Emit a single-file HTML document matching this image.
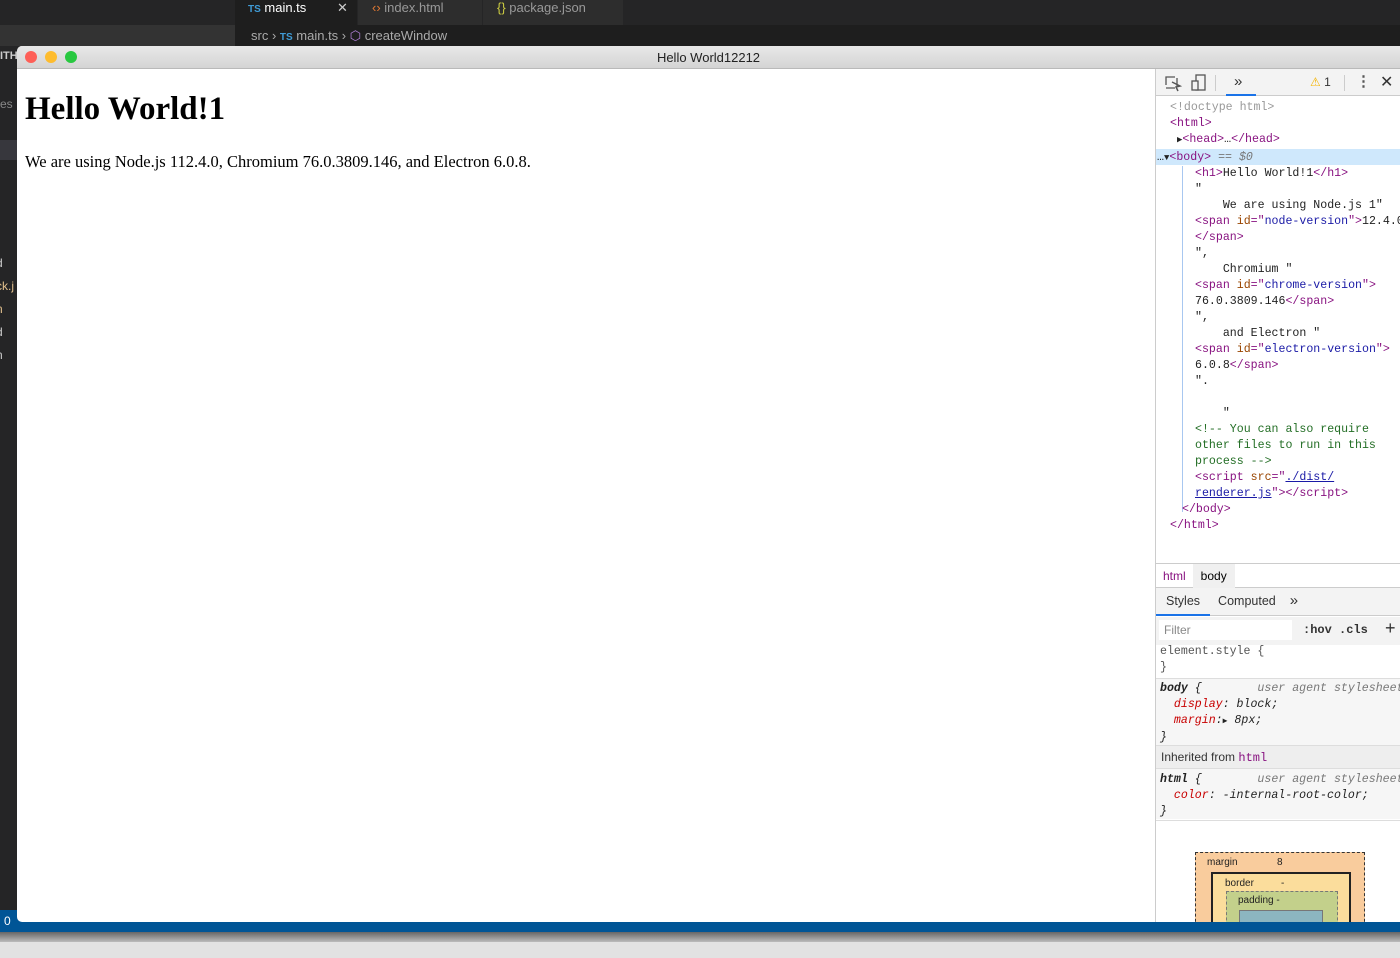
<!DOCTYPE html>
<html><head><style>
*{margin:0;padding:0;box-sizing:border-box}
body{width:1400px;height:958px;overflow:hidden;background:#252526;font-family:"Liberation Sans",sans-serif;position:relative}
.abs{position:absolute}
.mono{font-family:"Liberation Mono",monospace;font-size:12px}
.tag{color:#881280}.attr{color:#994500}.val{color:#1a1aa6}.cm{color:#236e25}
.dl{position:absolute;white-space:pre;font-family:"Liberation Mono",monospace;font-size:11.6px;color:#222;line-height:16px}
</style></head><body>
<div class="abs" style="left:0;top:0;width:1400px;height:25px;background:#252526"></div>
<div class="abs" style="left:0;top:25px;width:235px;height:21px;background:#333"></div>
<div class="abs" style="left:235px;top:0;width:122px;height:25px;background:#1e1e1e;color:#fff;font-size:13px;padding:0 0 0 13px;line-height:16px"><span style="color:#3f9bd6;font-size:10px;font-weight:bold">TS</span> main.ts<span style="position:absolute;left:102px;color:#ccc">✕</span></div>
<div class="abs" style="left:358px;top:0;width:124px;height:25px;background:#2d2d2d;color:#999;font-size:13px;padding-left:14px;line-height:16px"><span style="color:#e37933">‹›</span> index.html</div>
<div class="abs" style="left:483px;top:0;width:140px;height:25px;background:#2d2d2d;color:#999;font-size:13px;padding-left:14px;line-height:16px"><span style="color:#cbcb41">{}</span> package.json</div>
<div class="abs" style="left:235px;top:25px;width:1165px;height:21px;background:#1e1e1e;color:#aaa;font-size:13px;padding-left:16px;line-height:22px">src › <span style="color:#3f9bd6;font-size:10px;font-weight:bold">TS</span> main.ts › <span style="color:#b180d7">⬡</span> createWindow</div>
<div class="abs" style="left:0;top:140px;width:17px;height:20px;background:#37373d"></div>
<div class="abs" style="left:0;top:50px;color:#ccc;font-size:11px;font-weight:bold">ITH</div>
<div class="abs" style="left:0;top:97px;color:#888;font-size:12px">es</div>
<div class="abs" style="left:-4px;top:252px;color:#ccc;font-size:12px;line-height:23px">d<br><span style="color:#e2c08d">ck.j</span><br><span style="color:#e2c08d">n</span><br>d<br>n</div>
<div class="abs" style="left:0;top:910px;width:1400px;height:22px;background:#005596;color:#fff;font-size:12px;padding-left:4px;line-height:22px">0</div>
<div class="abs" style="left:0;top:932px;width:1400px;height:10px;background:linear-gradient(#666,#bbb)"></div>
<div class="abs" style="left:0;top:942px;width:1400px;height:16px;background:#e2e2e2"></div>
<div class="abs" style="left:17px;top:46px;width:1383px;height:876px;background:#fff;border-radius:5px 0 0 5px;overflow:hidden">
 <div class="abs" style="left:0;top:0;width:1383px;height:23px;background:linear-gradient(#e8e8e8,#d4d4d4);border-bottom:1px solid #b9b9b9;text-align:center;font-size:13px;line-height:23px;color:#222">Hello World12212</div>
 <div class="abs" style="left:8px;top:5px;width:12px;height:12px;border-radius:50%;background:#fe5f57"></div>
 <div class="abs" style="left:28px;top:5px;width:12px;height:12px;border-radius:50%;background:#febc2e"></div>
 <div class="abs" style="left:48px;top:5px;width:12px;height:12px;border-radius:50%;background:#28c840"></div>
 <div class="abs" style="left:8px;top:45px;font-family:'Liberation Serif',serif;font-size:33px;font-weight:bold;color:#000">Hello World!1</div>
 <div class="abs" style="left:8px;top:106px;font-family:'Liberation Serif',serif;font-size:16.5px;color:#000">We are using Node.js 112.4.0, Chromium 76.0.3809.146, and Electron 6.0.8.</div>
 <div class="abs" style="left:1138px;top:23px;width:245px;height:853px;background:#fff;border-left:1px solid #ccc;overflow:hidden">
  <div class="abs" style="left:0;top:0;width:245px;height:27px;background:#f3f3f3;border-bottom:1px solid #ccc"></div>
  <svg class="abs" style="left:8px;top:5px" width="20" height="18"><rect x="2" y="3" width="11" height="11" fill="none" stroke="#555" stroke-width="1.3" stroke-dasharray="9 3"/><path d="M8 8 L16 12 L12 13 L14 17" fill="none" stroke="#555" stroke-width="1.5"/></svg>
  <svg class="abs" style="left:34px;top:4px" width="18" height="20"><rect x="6" y="2" width="9" height="15" fill="none" stroke="#555" stroke-width="1.3"/><rect x="2" y="8" width="6" height="9" fill="#f3f3f3" stroke="#555" stroke-width="1.3"/></svg>
  <div class="abs" style="left:59px;top:6px;width:1px;height:16px;background:#ccc"></div>
  <div class="abs" style="left:78px;top:4px;font-size:15px;color:#333">»</div>
  <div class="abs" style="left:70px;top:25px;width:30px;height:2px;background:#1a73e8"></div>
  <div class="abs" style="left:154px;top:6px;font-size:12px;color:#333"><span style="color:#f4b400">⚠</span> 1</div>
  <div class="abs" style="left:188px;top:6px;width:1px;height:16px;background:#ccc"></div>
  <div class="abs" style="left:200px;top:3px;font-size:15px;color:#555;font-weight:bold">⋮</div>
  <div class="abs" style="left:224px;top:3px;font-size:16px;color:#333">✕</div>
  <div class="abs" style="left:0;top:80px;width:245px;height:16px;background:#cfe8fc"></div>
  <div class="abs" style="left:26px;top:97px;width:1px;height:346px;background:#a8c7f0"></div>
  <div class="dl" style="left:14px;top:31px"><span style="color:#999">&lt;!doctype html&gt;</span>
<span class="tag">&lt;html&gt;</span>
 <span style="font-size:9px">▶</span><span class="tag">&lt;head&gt;</span>…<span class="tag">&lt;/head&gt;</span></div>
  <div class="dl" style="left:1px;top:81px">…<span style="font-size:9px">▼</span><span class="tag">&lt;body&gt;</span> <span style="color:#777">== <i>$0</i></span></div>
  <div class="dl" style="left:39px;top:97px"><span class="tag">&lt;h1&gt;</span>Hello World!1<span class="tag">&lt;/h1&gt;</span>
"
    We are using Node.js 1"
<span class="tag">&lt;span </span><span class="attr">id</span><span class="tag">="</span><span class="val">node-version</span><span class="tag">"&gt;</span>12.4.0
<span class="tag">&lt;/span&gt;</span>
",
    Chromium "
<span class="tag">&lt;span </span><span class="attr">id</span><span class="tag">="</span><span class="val">chrome-version</span><span class="tag">"&gt;</span>
76.0.3809.146<span class="tag">&lt;/span&gt;</span>
",
    and Electron "
<span class="tag">&lt;span </span><span class="attr">id</span><span class="tag">="</span><span class="val">electron-version</span><span class="tag">"&gt;</span>
6.0.8<span class="tag">&lt;/span&gt;</span>
".

    "
<span class="cm">&lt;!-- You can also require
other files to run in this
process --&gt;</span>
<span class="tag">&lt;script </span><span class="attr">src</span><span class="tag">="</span><span class="val" style="text-decoration:underline">./dist/</span>
<span class="val" style="text-decoration:underline">renderer.js</span><span class="tag">"&gt;&lt;/script&gt;</span></div>
  <div class="dl" style="left:26px;top:433px"><span class="tag">&lt;/body&gt;</span></div>
  <div class="dl" style="left:14px;top:449px"><span class="tag">&lt;/html&gt;</span></div>
  <div class="abs" style="left:0;top:494px;width:245px;height:1px;background:#ccc"></div>
  <div class="abs" style="left:0;top:495px;width:245px;height:24px;border-bottom:1px solid #ccc;font-size:12px;line-height:24px"><span style="color:#881280;padding:0 7px">html</span><span style="background:#f0f0f0;padding:5px 8px">body</span></div>
  <div class="abs" style="left:0;top:519px;width:245px;height:28px;background:#f3f3f3;border-bottom:1px solid #ccc;font-size:12.5px;line-height:26px;color:#333"><span style="padding:0 10px;display:inline-block;border-bottom:2px solid #1a73e8">Styles</span><span style="padding:0 8px">Computed</span><span style="padding:0 6px;font-size:15px">»</span></div>
  <div class="abs" style="left:0;top:548px;width:245px;height:28px;background:#f3f3f3"></div>
  <div class="abs" style="left:3px;top:551px;width:133px;height:20px;background:#fff;font-size:12px;color:#888;padding-left:5px;line-height:20px">Filter</div>
  <div class="abs mono" style="left:147px;top:554px;font-weight:bold;color:#333">:hov  .cls</div>
  <div class="abs" style="left:229px;top:549px;font-size:18px;color:#333">+</div>
  <div class="dl" style="left:4px;top:575px;color:#555">element.style {
}</div>
  <div class="abs" style="left:0;top:609px;width:245px;height:1px;background:#ddd"></div>
  <div class="abs" style="left:0;top:610px;width:245px;height:66px;background:#f6f6f6"></div>
  <div class="dl" style="left:4px;top:612px;font-style:italic"><b style="color:#222">body</b> {        <span style="color:#777">user agent stylesheet</span>
  <span style="color:#c80000">display</span>: block;
  <span style="color:#c80000">margin</span>:<span style="font-size:8px">▶</span> 8px;
}</div>
  <div class="abs" style="left:0;top:676px;width:245px;height:24px;background:#eee;border-top:1px solid #ddd;border-bottom:1px solid #ddd;font-size:12px;line-height:22px;padding-left:5px;color:#333">Inherited from <span class="mono" style="color:#881280">html</span></div>
  <div class="abs" style="left:0;top:700px;width:245px;height:50px;background:#f6f6f6"></div>
  <div class="dl" style="left:4px;top:703px;font-style:italic"><b style="color:#222">html</b> {        <span style="color:#777">user agent stylesheet</span>
  <span style="color:#c80000">color</span>: -internal-root-color;
}</div>
  <div class="abs" style="left:0;top:751px;width:245px;height:1px;background:#ddd"></div>
  <div class="abs" style="left:39px;top:783px;width:170px;height:80px;background:#f9cc9d;border:1px dashed #333;font-size:10px;color:#222;padding:4px 11px">margin<span style="position:absolute;left:81px">8</span>
   <div class="abs" style="left:15px;top:19px;width:140px;height:60px;background:#fbdd9c;border:2px solid #222;padding:4px 12px">border<span style="position:absolute;left:68px">-</span>
    <div class="abs" style="left:13px;top:17px;width:112px;height:40px;background:#c3d08b;border:1px dashed #777;padding:3px 11px">padding -
     <div class="abs" style="left:12px;top:18px;width:84px;height:20px;background:#8cb6c0;border:1px solid #777"></div>
    </div>
   </div>
  </div>
 </div>
</div>
</body></html>
